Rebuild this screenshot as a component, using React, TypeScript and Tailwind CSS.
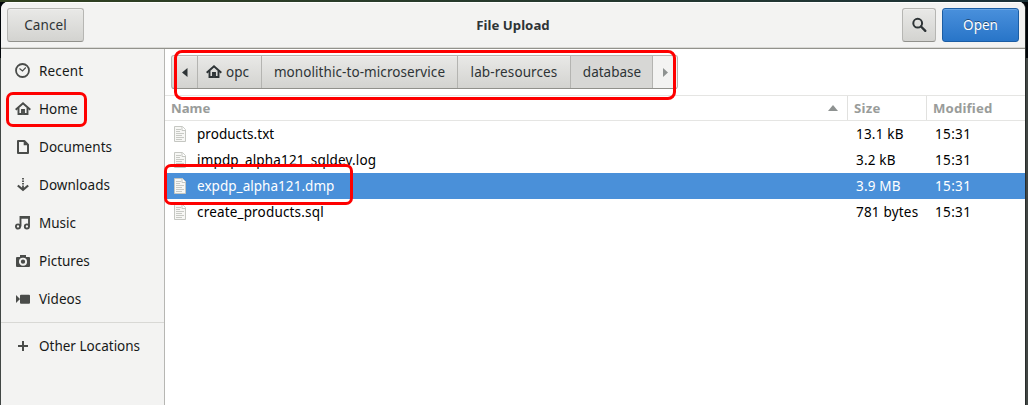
import React from "react";

const INK = "#4a4c4a";

function HomeIcon({ color = INK }: { color?: string }) {
  return (
    <svg width="16" height="16" viewBox="0 0 16 16" fill="none" stroke={color}>
      <path d="M.7 8.700 8 2.300l7.300 6.400" strokeWidth="2" />
      <path d="M3.500 7v6H7V9h2v4h3.500V7" strokeWidth="1.900" />
    </svg>
  );
}

function RecentIcon() {
  return (
    <svg width="16" height="16" viewBox="0 0 16 16" fill="none" stroke={INK}>
      <circle cx="7.500" cy="7.500" r="6.500" strokeWidth="1.8" />
      <path d="M4.500 5.500 7.500 8l3.300-3.500" strokeWidth="1.1" />
    </svg>
  );
}

function DocumentIcon() {
  return (
    <svg width="16" height="16" viewBox="0 0 16 16" fill="none" stroke={INK} strokeWidth="2">
      <path d="M3 2h6.300L13 5.700V14H3z" strokeLinejoin="round" />
      <path d="M8.700 2v4.300H13z" fill={INK} stroke="none" />
    </svg>
  );
}

function DownloadIcon() {
  return (
    <svg width="16" height="16" viewBox="0 0 16 16" fill="none" stroke={INK}>
      <path d="M8 1v1.400M8 3.500v1.500M8 6v1.500M8 8.500v4" strokeWidth="1.800" />
      <path d="m2.800 8.500 5.200 4.300 5.200-4.300" strokeWidth="2.200" />
    </svg>
  );
}

function MusicIcon() {
  return (
    <svg width="16" height="16" viewBox="0 0 16 16" fill="none" stroke={INK} strokeWidth="1.900">
      <circle cx="3" cy="11.500" r="2.100" />
      <circle cx="11.900" cy="11.500" r="2.100" />
      <path d="M5.500 11.500V2H14v9.500" />
      <path d="M5 2.500h9.500" strokeWidth="2.600" />
    </svg>
  );
}

function CameraIcon() {
  return (
    <svg width="16" height="16" viewBox="0 0 16 16">
      <path d="M5 2h6v2h3q1 0 1 1v8q0 1-1 1H2q-1 0-1-1V5q0-1 1-1h3z" fill={INK} />
      <circle cx="8" cy="8.700" r="3.100" fill={INK} stroke="#f3f3f2" strokeWidth="1.900" />
    </svg>
  );
}

function VideoIcon() {
  return (
    <svg width="16" height="16" viewBox="0 0 16 16" fill={INK}>
      <path d="M1 4v8l4-4zM6 3.700h8q1 0 1 1v7q0 1-1 1H6q-1 0-1-1v-7q0-1 1-1z" />
    </svg>
  );
}

function PlusIcon() {
  return (
    <svg width="16" height="16" viewBox="0 0 16 16" stroke={INK} strokeWidth="2">
      <path d="M3 8h10M8 3v10" />
    </svg>
  );
}

function SearchIcon() {
  return (
    <svg width="16" height="16" viewBox="0 0 16 16" fill="none" stroke="#2e3436">
      <circle cx="6.700" cy="6.200" r="4.400" strokeWidth="2" />
      <path d="m10 9.500 4.300 4.300" strokeWidth="2.400" strokeLinecap="round" />
    </svg>
  );
}

function FileIcon() {
  return (
    <svg width="16" height="16" viewBox="0 0 16 16" fill="none">
      <path d="M2.500.5h8l3 3v12h-11z" fill="#f7f7f5" stroke="#c5c7c2" />
      <path d="M10 .5v4h4" fill="#fff" stroke="#c5c7c2" />
      <path d="M4 3.500h5M4 5.500h4M4 7.500h8M4 9.500h6M4 11.500h8M4 13.500h6" stroke="#c8cac5" />
    </svg>
  );
}

const places = [
  { name: "Recent", icon: <RecentIcon />, spacing: "tracking-[0.18px]" },
  { name: "Home", icon: <HomeIcon />, spacing: "tracking-[0.05px]" },
  { name: "Documents", icon: <DocumentIcon />, spacing: "tracking-[0.03px]" },
  { name: "Downloads", icon: <DownloadIcon />, spacing: "tracking-[0.03px]" },
  { name: "Music", icon: <MusicIcon />, spacing: "tracking-[0px]" },
  { name: "Pictures", icon: <CameraIcon />, spacing: "tracking-[0px]" },
  { name: "Videos", icon: <VideoIcon />, spacing: "tracking-[0px]" },
];

const files = [
  { name: "products.txt", size: "13.1 kB", time: "15:31", spacing: "tracking-[0.04px]" },
  { name: "impdp_alpha121_sqldev.log", size: "3.2 kB", time: "15:31", spacing: "tracking-[0.16px]" },
  { name: "expdp_alpha121.dmp", size: "3.9 MB", time: "15:31", spacing: "tracking-[0.04px]", selected: true },
  { name: "create_products.sql", size: "781 bytes", time: "15:31", spacing: "tracking-[0.17px]" },
];

const raised =
  "border border-[#b6b6b3] border-b-[#91918c] bg-linear-to-b from-[#e9e9e7] to-[#d3d3d0] shadow-[inset_0_1px_0_#f0f0ef]";
const crumb =
  "flex h-full shrink-0 items-center justify-center border-r border-[#b4b4b1]";

export default function App() {
  return (
    <div className="relative h-[405px] w-[1028px] overflow-hidden bg-[#414644] bg-linear-to-b from-[#02060a] from-[58px] to-[#414644] to-[58px] pl-px pr-[2px] font-['Noto_Sans',sans-serif] text-[13.5px] leading-5 text-[#171918]">
      <div className="-ml-px -mr-[2px] h-[2px] bg-linear-to-r from-[#30401f] to-[#1c3238]" />
      <div className="flex h-[403px] w-[1025px] flex-col overflow-hidden rounded-t-[7px] border-r border-[#272b2a] bg-white">
        <header className="flex h-[47px] shrink-0 items-start border-b border-[#92928c] bg-[#f3f3f2] pl-[6px] pr-[6px] pt-[6px] text-[#2e3436] shadow-[inset_0_1px_0_#fff,inset_0_-1px_0_#d9d9d6]">
          <button className={`h-[34px] w-[77px] rounded-[3px] tracking-[0.08px] ${raised}`}>Cancel</button>
          <h1 className="ml-[40px] flex-1 pt-[7px] text-center text-[13.2px] font-bold tracking-[0.02px]">File Upload</h1>
          <button className={`mr-[6px] flex h-[34px] w-[34px] items-center justify-center rounded-[3px] ${raised}`}>
            <SearchIcon />
          </button>
          <button className="h-[34px] w-[77px] rounded-[3px] border border-[#1b5da3] bg-linear-to-b from-[#4990dc] to-[#2875c8] text-white shadow-[inset_0_1px_0_#68a7e5] [text-shadow:0_-1px_#0007]">
            Open
          </button>
        </header>

        <div className="flex min-h-0 flex-1">
          <nav className="w-[164px] shrink-0 border-r border-[#b6b6b3] bg-[#f3f3f2] pt-[3px]">
            {places.map((place) => (
              <div key={place.name} className="flex h-[38px] items-center gap-2 pl-[14px]">
                {place.icon}
                <span className={place.spacing}>{place.name}</span>
              </div>
            ))}
            <div className="mt-[4px] h-px bg-[#d8d8d5]" />
            <div className="mt-[4px] flex h-[38px] items-center gap-2 pl-[14px]">
              <PlusIcon />
              <span>Other Locations</span>
            </div>
          </nav>

          <main className="min-w-0 flex-1">
            <div className="flex h-[46px] pl-[6px] pt-[6px]">
              <div className={`flex h-[34px] w-[507px] overflow-hidden rounded-[3px] text-[#2e3436] ${raised}`}>
                <div className={`${crumb} w-[26px]`}>
                  <svg width="6" height="9" viewBox="0 0 6 9" fill="#2e3436"><path d="M5.500 0v9L0 4.500z" /></svg>
                </div>
                <div className={`${crumb} w-[64px] gap-1 pr-1`}>
                  <HomeIcon color="#2e3436" />
                  <span>opc</span>
                </div>
                <div className={`${crumb} w-[196px] tracking-[0.07px]`}>monolithic-to-microservice</div>
                <div className={`${crumb} w-[113px] tracking-[0.1px]`}>lab-resources</div>
                <div className={`${crumb} w-[82px] bg-[#d7d7d5] pl-px`}>database</div>
                <div className="flex h-full flex-1 items-center justify-center bg-[#f3f3f2]">
                  <svg width="5" height="9" viewBox="0 0 5 9" fill="#8e9291"><path d="M0 0v9l5-4.500z" /></svg>
                </div>
              </div>
            </div>

            <div className="grid h-[26px] grid-cols-[683px_79px_1fr] border-y border-[#e5e5e3] text-[13.2px] font-bold text-[#999c9a]">
              <div className="flex items-center justify-between border-r border-[#e1e1df] pl-[6px] pr-[9px]">
                Name
                <svg width="10" height="6" viewBox="0 0 10 6" fill="#8e9291"><path d="M0 6 5 0l5 6z" /></svg>
              </div>
              <div className="flex items-center border-r border-[#e1e1df] pl-[6px] tracking-[0.3px]">Size</div>
              <div className="flex items-center pl-[6px] tracking-[0.15px]">Modified</div>
            </div>

            {files.map((file) => (
              <div
                key={file.name}
                className={`grid h-[26px] grid-cols-[691px_79px_1fr] items-center ${file.selected ? "bg-[#4a90d9] text-white" : "text-black"}`}
              >
                <div className="flex items-center gap-[9px] pl-[7px]">
                  <FileIcon />
                  <span className={file.spacing}>{file.name}</span>
                </div>
                <span className="tracking-[0.2px]">{file.size}</span>
                <span className="tracking-[0.35px]">{file.time}</span>
              </div>
            ))}
          </main>
        </div>
      </div>

      <div className="absolute left-[6px] top-[92px] h-[35px] w-[81px] rounded-[7px] border-3 border-[#fe0000]" />
      <div className="absolute left-[174px] top-[50px] h-[50px] w-[502px] rounded-[8px] border-3 border-[#fe0000]" />
      <div className="absolute left-[164px] top-[164px] h-[41px] w-[189px] rounded-[7px] border-3 border-[#fe0000]" />
    </div>
  );
}
